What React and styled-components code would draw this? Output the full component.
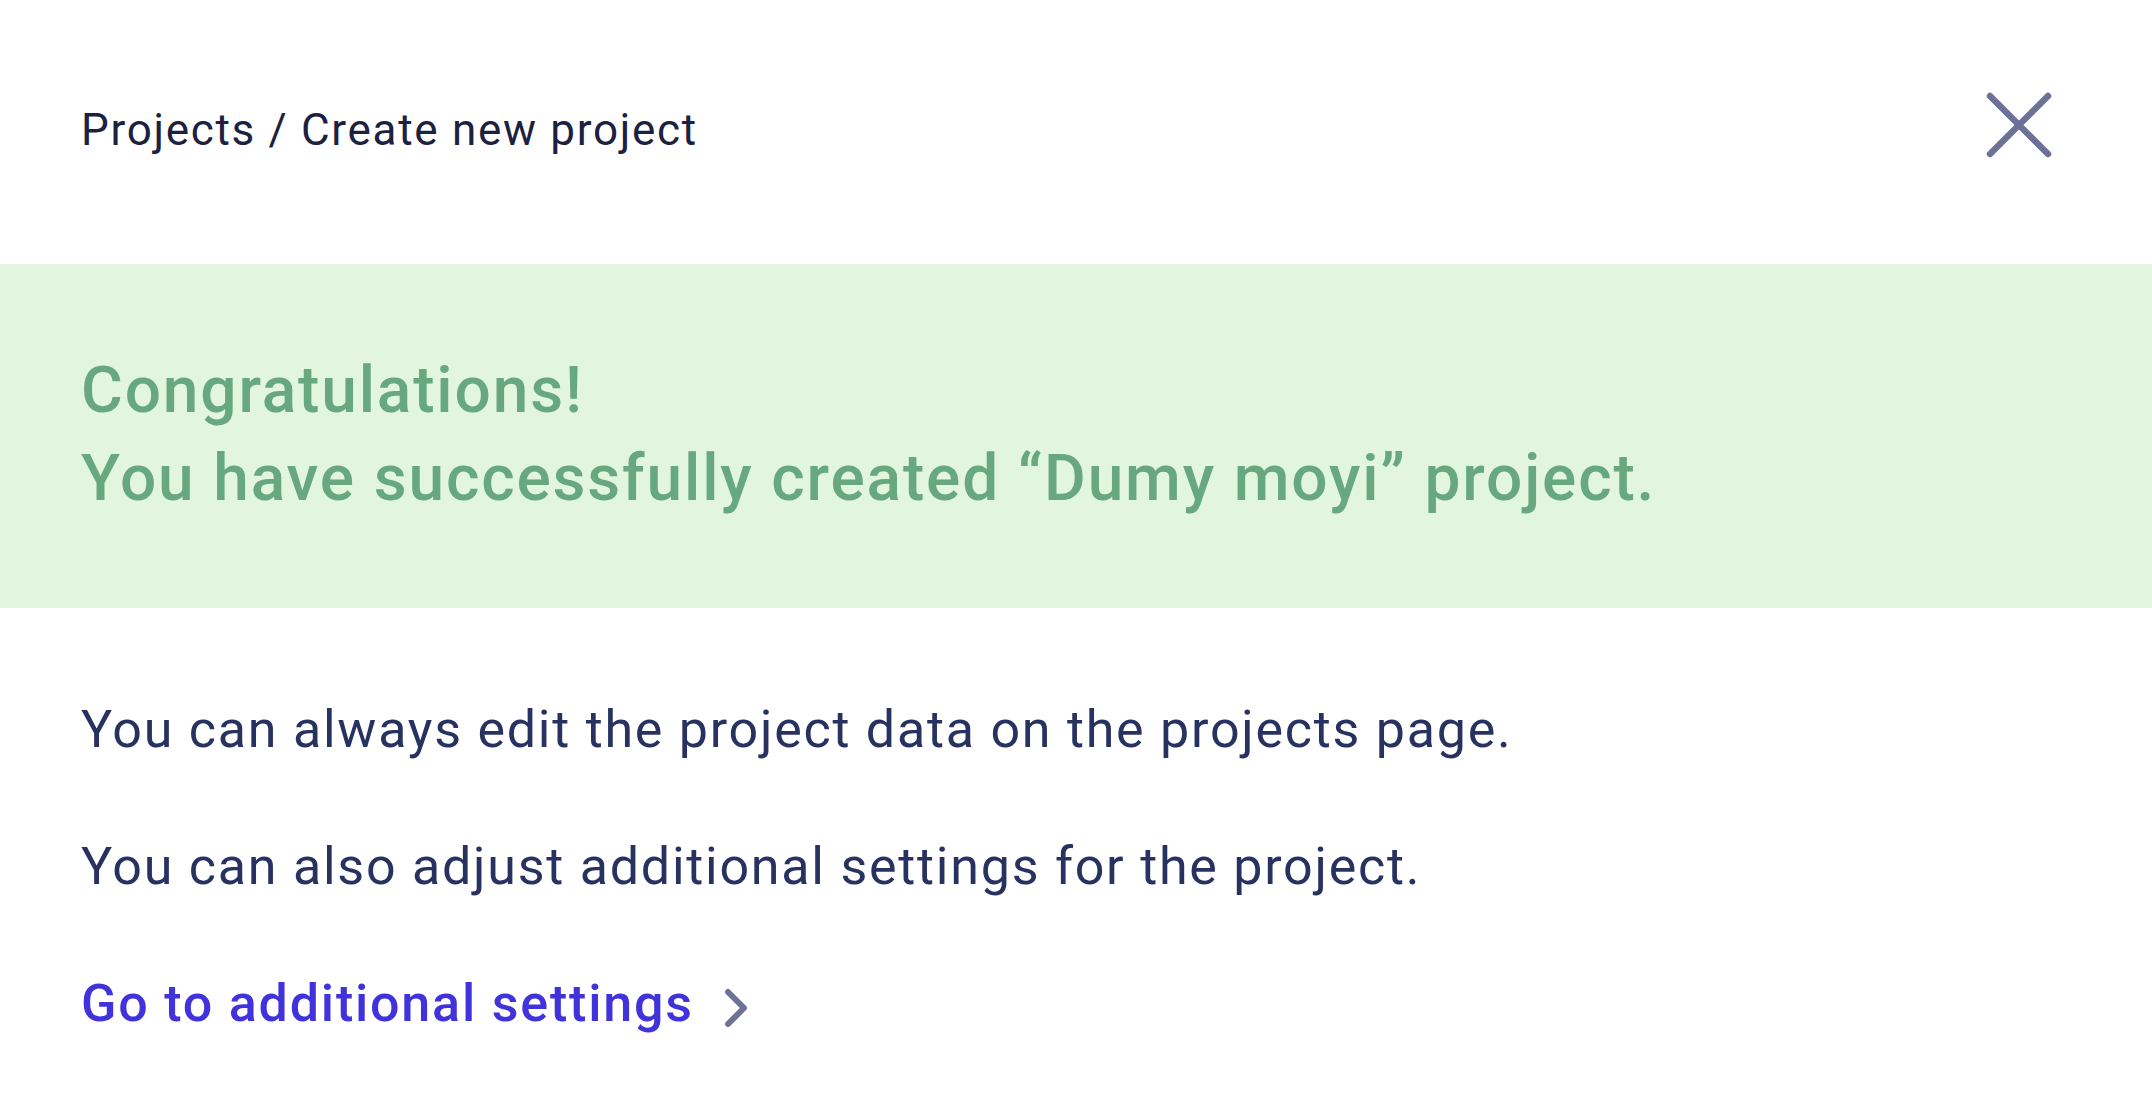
import React from "react";
import styled, { createGlobalStyle } from "styled-components";

const GlobalStyle = createGlobalStyle`
  html, body {
    margin: 0;
    padding: 0;
    background: #ffffff;
    font-family: Roboto, "Noto Sans", "Liberation Sans", sans-serif;
  }
`;

const Page = styled.div`
  width: 100%;
  min-height: 1120px;
  background: #ffffff;
`;

const Header = styled.header`
  height: 264px;
  box-sizing: border-box;
  display: flex;
  align-items: center;
  justify-content: space-between;
  padding: 0 100px 0 81px;
`;

const Breadcrumb = styled.nav`
  font-size: 44px;
  line-height: 60px;
  letter-spacing: 1.7px;
  color: #1c213f;
  margin-bottom: 4px;
`;

const CloseButton = styled.button`
  border: 0;
  background: none;
  padding: 0;
  margin-bottom: 14px;
  cursor: pointer;
  display: flex;
`;

const Banner = styled.section`
  background: #e2f5df;
  padding: 83px 81px 85px;
  color: #67a881;
  font-size: 64px;
  line-height: 88px;
  letter-spacing: 1.85px;
  font-weight: 500;
`;

const Content = styled.div`
  padding: 86px 81px 0;
  display: flex;
  flex-direction: column;
  gap: 65px;
`;

const Text = styled.p`
  margin: 0;
  font-size: 52px;
  line-height: 72px;
  letter-spacing: 1.75px;
  color: #283261;
`;

const SettingsLink = styled.a`
  display: flex;
  align-items: center;
  gap: 30px;
  font-size: 52px;
  line-height: 72px;
  letter-spacing: 1.8px;
  font-weight: 500;
  color: #4033dc;
  text-decoration: none;
  cursor: pointer;
`;

function CloseIcon() {
  return (
    <svg width="66" height="66" viewBox="0 0 66 66" fill="none">
      <path
        d="M4 4 L62 62 M62 4 L4 62"
        stroke="#6c7198"
        strokeWidth="6.5"
        strokeLinecap="round"
      />
    </svg>
  );
}

function Chevron() {
  return (
    <svg width="26" height="40" viewBox="0 0 26 40" fill="none" style={{ marginTop: 8 }}>
      <path
        d="M4 4 L20 20 L4 36"
        stroke="#6c7395"
        strokeWidth="6"
        strokeLinecap="round"
        strokeLinejoin="round"
      />
    </svg>
  );
}

export default function App() {
  return (
    <>
      <GlobalStyle />
      <Page>
        <Header>
          <Breadcrumb>Projects / Create new project</Breadcrumb>
          <CloseButton aria-label="Close">
            <CloseIcon />
          </CloseButton>
        </Header>

        <Banner>
          <div>Congratulations!</div>
          <div>You have successfully created “Dumy moyi” project.</div>
        </Banner>

        <Content>
          <Text>You can always edit the project data on the projects page.</Text>
          <Text>You can also adjust additional settings for the project.</Text>
          <SettingsLink>
            Go to additional settings
            <Chevron />
          </SettingsLink>
        </Content>
      </Page>
    </>
  );
}
